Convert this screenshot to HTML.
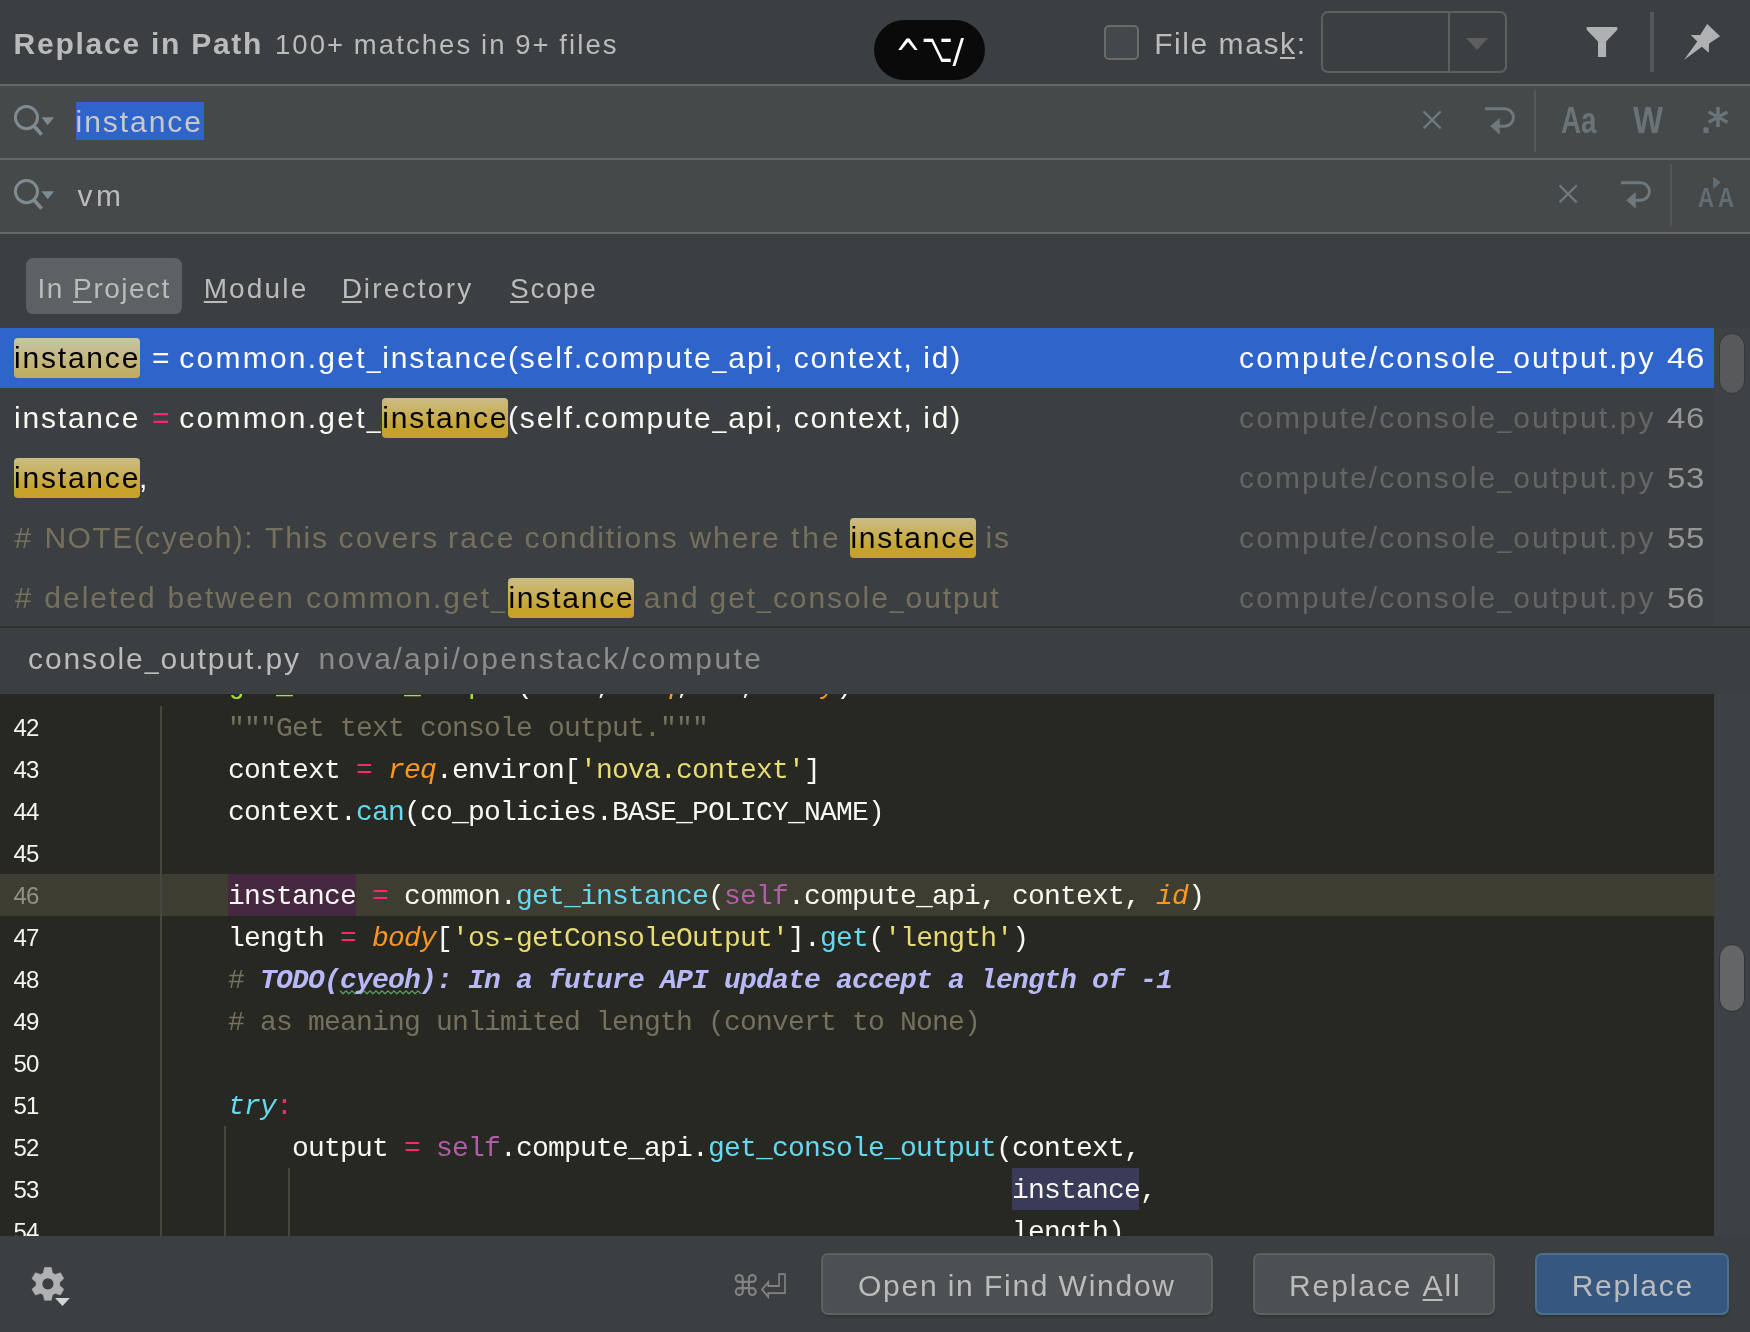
<!DOCTYPE html>
<html lang="en">
<head>
<meta charset="utf-8">
<title>Replace in Path</title>
<style>
html,body{margin:0;padding:0;}
html{background:#3c3f41;}
body{will-change:transform;width:1750px;height:1332px;overflow:hidden;background:#3c3f41;position:relative;
  font-family:"Liberation Sans","DejaVu Sans",sans-serif;color:#bbbbbb;}
.abs{position:absolute;}
.t{position:absolute;white-space:pre;line-height:40px;height:40px;font-size:30px;}
.g{font-family:"DejaVu Sans",sans-serif;transform-origin:0 0;}
.ic{color:#6a7378;font-weight:bold;transform-origin:0 0;}
.us{font-size:.8333em;}
.hl{position:absolute;height:2px;left:0;width:1750px;background:#666767;}
.field{position:absolute;left:0;width:1750px;height:72px;background:#45494a;}
u{letter-spacing:0;margin-right:1.8px;text-decoration:underline;text-decoration-thickness:2px;text-underline-offset:2.5px;}
/* result rows */
.row{position:absolute;left:0;width:1714px;height:60px;}
.row .t{top:10px;color:#f8f8f2;}
.box{position:absolute;top:10px;height:40px;border-radius:4px;background:linear-gradient(#cbbd86,#c6a22a 80%);}
.row.sel{background:#2f65ca;}
.row.sel .box{background:linear-gradient(#c7c5a7,#c1ab5c);}
.row .t.k{color:#000;}
.row .t.c{color:#75715e;}
.row .t.p{color:#656565;}
.row .t.n{color:#969696;}
.row.sel .p,.row.sel .n,.row.sel .t{color:#ffffff;}
.row.sel .t.k{color:#000;}
/* editor */
#ed{position:absolute;left:0;top:694px;width:1714px;height:542px;background:#272822;overflow:hidden;
  font-family:"Liberation Mono","DejaVu Sans Mono",monospace;}
.ln{position:absolute;left:0;width:1714px;height:42px;}
.ln .num{position:absolute;left:13.5px;top:1px;line-height:42px;font-size:24px;letter-spacing:-.8px;color:#f4f4ee;white-space:pre;font-family:"Liberation Sans",sans-serif;}
.ln .code{position:absolute;left:100px;top:2px;line-height:42px;font-size:28px;letter-spacing:-.8027px;color:#f8f8f2;white-space:pre;}
.guide{position:absolute;width:2px;background:#46473f;}
.pk,.row .t.pk{color:#f92672;} .st{color:#e6db74;} .cm{color:#75715e;} .fn{color:#66d9ef;} .pa{color:#fd971f;font-style:italic;}
.se{color:#ae5fa8;} .td{color:#b9b9fa;font-style:italic;font-weight:bold;} .kw{color:#66d9ef;font-style:italic;}
/* buttons */
.btn{position:absolute;top:1253px;height:58px;border:2px solid #5e6060;border-radius:7px;background:#4c5052;
  box-shadow:0 2px 2px rgba(0,0,0,.18);}
.btn.def{background:#365880;border-color:#4c708c;}
</style>
</head>
<body>

<!-- header -->
<div class="t" style="left:13.6px;top:24px;font-weight:bold;letter-spacing:1.74px;">Replace in Path</div>
<div class="t" style="left:274.9px;top:24.5px;font-size:27.5px;letter-spacing:2.08px;word-spacing:-1.07px;">100+ matches in 9+ files</div>

<div class="abs" style="left:874px;top:20px;width:111px;height:60px;border-radius:30px;background:#0a0a0a;"></div>
<div class="t g" style="left:895px;top:26.5px;color:#fff;font-size:31px;transform:scale(1,1.4);">^</div>
<div class="t g" style="left:921.5px;top:18px;color:#fff;font-size:27px;transform:scale(1,1.5);">⌥</div>
<div class="t g" style="left:952.5px;top:31px;color:#fff;font-size:34px;">/</div>

<div class="abs" style="left:1104px;top:25px;width:31px;height:31px;border:2px solid #6b6b6b;border-radius:5px;background:#43494a;"></div>
<div class="t" style="left:1154.2px;top:24px;letter-spacing:1.55px;">File mas<u>k</u>:</div>
<div class="abs" style="left:1321px;top:11px;width:182px;height:58px;border:2px solid #5e6060;border-radius:7px;"></div>
<div class="abs" style="left:1448px;top:13px;width:2px;height:58px;background:#5e6060;"></div>
<svg class="abs" style="left:1465px;top:38px;" width="24" height="13" viewBox="0 0 24 13"><path d="M1 0H23L12 12Z" fill="#5c5e60"/></svg>
<svg class="abs" style="left:1580px;top:20px;" width="44" height="44" viewBox="1580 20 44 44"><path d="M1586.7 27H1617.3V29.7L1606.1 41.6V57.1H1598V41.6L1586.7 29.7Z" fill="#afb1b3"/></svg>
<div class="abs" style="left:1650px;top:12px;width:4px;height:60px;background:#55585a;"></div>
<svg class="abs" style="left:1680px;top:20px;" width="44" height="44" viewBox="1680 20 44 44"><path d="M1707.2 23.9L1720.1 36.2L1709.1 43.5L1708.7 52.7L1701.9 46.7L1683.9 60L1697.3 41.6L1690.7 35.1L1700.2 35.1Z" fill="#afb1b3"/></svg>

<div class="hl" style="top:84px;"></div>
<div class="field" style="top:86px;"></div>
<div class="hl" style="top:158px;"></div>
<div class="field" style="top:160px;"></div>
<div class="hl" style="top:232px;"></div>

<!-- search field 1 -->
<svg class="abs" style="left:10px;top:100px;" width="50" height="40" viewBox="10 100 50 40"><circle cx="26.45" cy="117.6" r="11.05" fill="none" stroke="#7f8b91" stroke-width="3"/><path d="M34.2 126.2L41.6 134.6" stroke="#7f8b91" stroke-width="3.7"/><path d="M41.5 117.2H54L47.7 125.2Z" fill="#7f8b91"/></svg>
<div class="abs" style="left:76px;top:102px;width:128px;height:38px;background:#2f65ca;"></div>
<div class="t" style="left:75.5px;top:101.5px;letter-spacing:1.96px;color:#c8c8c8;">instance</div>
<svg class="abs" style="left:1415px;top:100px;" width="110" height="40" viewBox="1415 100 110 40"><path d="M1423.5 111.4L1440.7 128.4M1440.7 111.4L1423.5 128.4" stroke="#6e787d" stroke-width="2.2" fill="none"/><path d="M1485 108.8H1504.75A8.7 8.7 0 0 1 1504.75 126.2H1499" stroke="#6e787d" stroke-width="2.9" fill="none"/><path d="M1490.2 126.2L1499.8 117.9V134.7Z" fill="#6e787d"/></svg>
<div class="abs" style="left:1534px;top:90px;width:2px;height:62px;background:#575a5b;"></div>
<div class="t ic" style="left:1561px;top:100.5px;font-size:36px;transform:scaleX(.77);">Aa</div>
<div class="t ic" style="left:1633px;top:100.5px;font-size:36px;transform:scaleX(.885);">W</div>
<div class="t ic" style="left:1701px;top:100.5px;font-size:36px;">.</div>
<div class="t ic g" style="left:1707px;top:105px;font-size:42px;">*</div>

<!-- search field 2 -->
<svg class="abs" style="left:10px;top:174px;" width="50" height="40" viewBox="10 100 50 40"><circle cx="26.45" cy="117.6" r="11.05" fill="none" stroke="#7f8b91" stroke-width="3"/><path d="M34.2 126.2L41.6 134.6" stroke="#7f8b91" stroke-width="3.7"/><path d="M41.5 117.2H54L47.7 125.2Z" fill="#7f8b91"/></svg>
<div class="t" style="left:77.5px;top:175.5px;letter-spacing:3.5px;">vm</div>
<svg class="abs" style="left:1550.8px;top:174px;" width="110" height="40" viewBox="1415 100 110 40"><path d="M1423.5 111.4L1440.7 128.4M1440.7 111.4L1423.5 128.4" stroke="#6e787d" stroke-width="2.2" fill="none"/><path d="M1485 108.8H1504.75A8.7 8.7 0 0 1 1504.75 126.2H1499" stroke="#6e787d" stroke-width="2.9" fill="none"/><path d="M1490.2 126.2L1499.8 117.9V134.7Z" fill="#6e787d"/></svg>
<div class="abs" style="left:1670px;top:164px;width:2px;height:62px;background:#575654;"></div>
<div class="t ic" style="left:1697.5px;top:177.5px;font-size:28px;color:#626c71;transform:scaleX(.79);">A</div>
<div class="t ic" style="left:1717.5px;top:177.5px;font-size:28px;color:#626c71;transform:scaleX(.79);">A</div>
<svg class="abs" style="left:1712px;top:175px;" width="10" height="16" viewBox="1712 175 10 16"><path d="M1713.1 176.8V189L1720.8 182.4Z" fill="#626c71"/></svg>

<!-- scope tabs -->
<div class="abs" style="left:26px;top:258px;width:156px;height:56px;border-radius:7px;background:#5c6164;"></div>
<div class="t" style="left:37.4px;top:269px;font-size:28px;letter-spacing:1.48px;">In <u>P</u>roject</div>
<div class="t" style="left:203.8px;top:269px;font-size:28px;letter-spacing:2.22px;"><u>M</u>odule</div>
<div class="t" style="left:341.8px;top:269px;font-size:28px;letter-spacing:2.23px;"><u>D</u>irectory</div>
<div class="t" style="left:510.1px;top:269px;font-size:28px;letter-spacing:1.47px;"><u>S</u>cope</div>

<!-- results -->
<div class="abs" style="left:1714px;top:328px;width:36px;height:299px;background:#3f4244;"></div>
<div class="abs" style="left:1718.5px;top:332.5px;width:24px;height:59px;border-radius:14px;background:#58595a;border:1.5px solid #343638;"></div>

<div class="row sel" style="top:328px;">
  <div class="box" style="left:14px;width:126px;"></div>
  <div class="t k" style="left:14px;letter-spacing:1.8px;">instance</div>
  <div class="t" style="left:152px;">=</div>
  <div class="t" style="left:179.3px;letter-spacing:2.24px;">common.get<span class="us">_</span></div>
  <div class="t" style="left:382.2px;letter-spacing:1.8px;">instance</div>
  <div class="t" style="left:507.9px;letter-spacing:1.89px;word-spacing:-.86px;">(self.compute<span class="us">_</span>api, context, id)</div>
  <div class="t p" style="left:1239.1px;letter-spacing:2.09px;">compute/console<span class="us">_</span>output.py</div><div class="t n" style="left:1667.4px;letter-spacing:.5px;transform:scaleX(1.1);transform-origin:0 0;">46</div>
</div>
<div class="row" style="top:388px;">
  <div class="box" style="left:382px;width:126px;"></div>
  <div class="t" style="left:14px;letter-spacing:1.8px;">instance</div>
  <div class="t pk" style="left:152px;">=</div>
  <div class="t" style="left:179.3px;letter-spacing:2.24px;">common.get<span class="us">_</span></div>
  <div class="t k" style="left:382.2px;letter-spacing:1.8px;">instance</div>
  <div class="t" style="left:507.9px;letter-spacing:1.89px;word-spacing:-.86px;">(self.compute<span class="us">_</span>api, context, id)</div>
  <div class="t p" style="left:1239.1px;letter-spacing:2.09px;">compute/console<span class="us">_</span>output.py</div><div class="t n" style="left:1667.4px;letter-spacing:.5px;transform:scaleX(1.1);transform-origin:0 0;">46</div>
</div>
<div class="row" style="top:448px;">
  <div class="box" style="left:14px;width:126px;"></div>
  <div class="t k" style="left:14px;letter-spacing:1.8px;">instance</div>
  <div class="t" style="left:139px;">,</div>
  <div class="t p" style="left:1239.1px;letter-spacing:2.09px;">compute/console<span class="us">_</span>output.py</div><div class="t n" style="left:1667.4px;letter-spacing:.5px;transform:scaleX(1.1);transform-origin:0 0;">53</div>
</div>
<div class="row" style="top:508px;">
  <div class="box" style="left:850px;width:126px;"></div>
  <div class="t c" style="left:14.4px;">#</div>
  <div class="t c" style="left:44.4px;letter-spacing:1.51px;">NOTE(cyeoh):</div>
  <div class="t c" style="left:265px;letter-spacing:1.8px;">This</div>
  <div class="t c" style="left:338.6px;letter-spacing:2.08px;">covers</div>
  <div class="t c" style="left:448px;letter-spacing:2.33px;">race</div>
  <div class="t c" style="left:524.6px;letter-spacing:1.89px;">conditions</div>
  <div class="t c" style="left:689.6px;letter-spacing:1.85px;">where</div>
  <div class="t c" style="left:791px;letter-spacing:3px;">the</div>
  <div class="t k" style="left:850.4px;letter-spacing:1.8px;">instance</div>
  <div class="t c" style="left:985.6px;letter-spacing:1.8px;">is</div>
  <div class="t p" style="left:1239.1px;letter-spacing:2.09px;">compute/console<span class="us">_</span>output.py</div><div class="t n" style="left:1667.4px;letter-spacing:.5px;transform:scaleX(1.1);transform-origin:0 0;">55</div>
</div>
<div class="row" style="top:568px;">
  <div class="box" style="left:508px;width:126px;"></div>
  <div class="t c" style="left:14.7px;letter-spacing:2px;word-spacing:.56px;"># deleted between common.get<span class="us">_</span></div>
  <div class="t k" style="left:508.4px;letter-spacing:1.8px;">instance</div>
  <div class="t c" style="left:643.7px;letter-spacing:1.92px;word-spacing:-.17px;">and get<span class="us">_</span>console<span class="us">_</span>output</div>
  <div class="t p" style="left:1239.1px;letter-spacing:2.09px;">compute/console<span class="us">_</span>output.py</div><div class="t n" style="left:1667.4px;letter-spacing:.5px;transform:scaleX(1.1);transform-origin:0 0;">56</div>
</div>

<!-- file path bar -->
<div class="abs" style="left:0;top:626px;width:1750px;height:2px;background:#2d2f30;"></div>
<div class="t" style="left:28px;top:639px;letter-spacing:1.89px;">console<span class="us">_</span>output.py</div>
<div class="t" style="left:318.6px;top:639px;letter-spacing:2.42px;color:#8c8c8c;">nova/api/openstack/compute</div>

<!-- editor -->
<div class="abs" style="left:1714px;top:694px;width:36px;height:542px;background:#3e4143;"></div>
<div class="abs" style="left:1718.5px;top:944px;width:24px;height:66px;border-radius:14px;background:#646567;border:1.5px solid #303234;"></div>
<div id="ed">
  <div class="ln" style="top:180px;background:#3e3d32;"></div>
  <div class="abs" style="left:228px;top:180px;width:128px;height:42px;background:#45283f;"></div>
  <div class="abs" style="left:1012px;top:474px;width:127px;height:42px;background:#3a3a59;"></div>
  <div class="guide" style="left:160px;top:12px;height:530px;"></div>
  <div class="guide" style="left:224px;top:432px;height:110px;"></div>
  <div class="guide" style="left:288px;top:474px;height:68px;"></div>

  <svg class="abs" style="left:0;top:0;" width="500" height="310" viewBox="0 0 500 310"><polyline points="340,296.8 343,299.8 346,296.8 349,299.8 352,296.8 355,299.8 358,296.8 361,299.8 364,296.8 367,299.8 370,296.8 373,299.8 376,296.8 379,299.8 382,296.8 385,299.8 388,296.8 391,299.8 394,296.8 397,299.8 400,296.8 403,299.8 406,296.8 409,299.8 412,296.8 415,299.8 418,296.8 421,299.8" fill="none" stroke="#5b9b5b" stroke-width="1.3"/></svg>
  <div class="ln" style="top:-31.5px;"><span class="code">    <span class="kw">def</span> <span style="color:#a6e22e">get_console_output</span>(<span class="pa">self</span>, <span class="pa">req</span>, <span class="pa">id</span>, <span class="pa">body</span>):</span></div>
  <div class="ln" style="top:12px;"><span class="num">42</span><span class="code">        <span class="cm">"""Get text console output."""</span></span></div>
  <div class="ln" style="top:54px;"><span class="num">43</span><span class="code">        context <span class="pk">=</span> <span class="pa">req</span>.environ[<span class="st">'nova.context'</span>]</span></div>
  <div class="ln" style="top:96px;"><span class="num">44</span><span class="code">        context.<span class="fn">can</span>(co_policies.BASE_POLICY_NAME)</span></div>
  <div class="ln" style="top:138px;"><span class="num">45</span></div>
  <div class="ln" style="top:180px;"><span class="num" style="color:#90918b;">46</span><span class="code">        instance <span class="pk">=</span> common.<span class="fn">get_instance</span>(<span class="se">self</span>.compute_api, context, <span class="pa">id</span>)</span></div>
  <div class="ln" style="top:222px;"><span class="num">47</span><span class="code">        length <span class="pk">=</span> <span class="pa">body</span>[<span class="st">'os-getConsoleOutput'</span>].<span class="fn">get</span>(<span class="st">'length'</span>)</span></div>
  <div class="ln" style="top:264px;"><span class="num">48</span><span class="code">        <span class="cm">#</span> <span class="td">TODO(cyeoh): In a future API update accept a length of -1</span></span></div>
  <div class="ln" style="top:306px;"><span class="num">49</span><span class="code">        <span class="cm"># as meaning unlimited length (convert to None)</span></span></div>
  <div class="ln" style="top:348px;"><span class="num">50</span></div>
  <div class="ln" style="top:390px;"><span class="num">51</span><span class="code">        <span class="kw">try</span><span class="pk">:</span></span></div>
  <div class="ln" style="top:432px;"><span class="num">52</span><span class="code">            output <span class="pk">=</span> <span class="se">self</span>.compute_api.<span class="fn">get_console_output</span>(context,</span></div>
  <div class="ln" style="top:474px;"><span class="num">53</span><span class="code">                                                         instance,</span></div>
  <div class="ln" style="top:516px;"><span class="num">54</span><span class="code">                                                         length)</span></div>
</div>

<!-- bottom bar -->
<svg class="abs" style="left:24px;top:1256px;" width="60" height="60" viewBox="0 0 60 60"><path fill-rule="evenodd" fill="#afb1b3" stroke="#afb1b3" stroke-width="0.6" stroke-linejoin="round" d="M28.4,16.9 L27.3,11.5 L20.5,11.5 L19.4,16.9 L16.6,18.5 L11.4,16.8 L8.0,22.6 L12.1,26.3 L12.1,29.5 L8.0,33.2 L11.4,39.0 L16.6,37.3 L19.4,38.9 L20.5,44.3 L27.3,44.3 L28.4,38.9 L31.2,37.3 L36.4,39.0 L39.8,33.2 L35.7,29.5 L35.7,26.3 L39.8,22.6 L36.4,16.8 L31.2,18.5Z M18.0,27.9 a5.9,5.9 0 1,0 11.8,0 a5.9,5.9 0 1,0 -11.8,0Z"/><path d="M31.1 42.1H45.9L38.5 50Z" fill="#d4d4d4"/></svg>
<div class="t g" style="left:731px;top:1266px;color:#808284;font-size:29px;">⌘</div>
<div class="t g" style="left:760px;top:1264.5px;color:#808284;font-size:33px;transform:scale(1,1.2);">⏎</div>
<div class="btn" style="left:821px;width:388px;"></div>
<div class="t" style="left:858px;top:1266px;letter-spacing:1.74px;word-spacing:-.71px;">Open in Find Window</div>
<div class="btn" style="left:1253px;width:238px;"></div>
<div class="t" style="left:1289px;top:1266px;letter-spacing:1.9px;">Replace <u>A</u>ll</div>
<div class="btn def" style="left:1535px;width:190px;"></div>
<div class="t" style="left:1571.7px;top:1266px;letter-spacing:1.72px;">Replace</div>

</body>
</html>
